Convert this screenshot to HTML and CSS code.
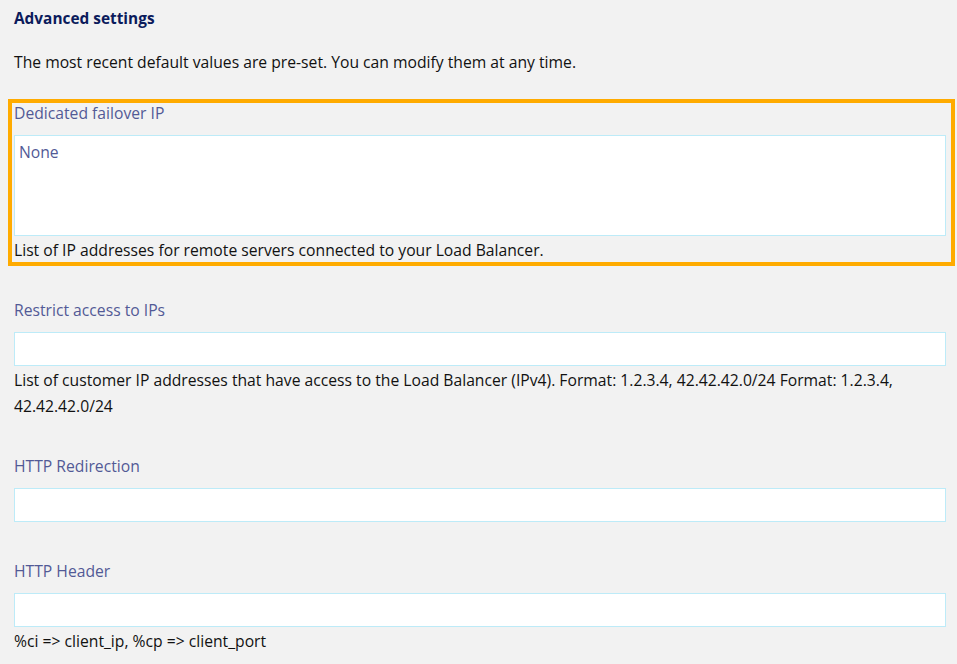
FILE: index.html
```html
<!DOCTYPE html>
<html lang="en">
<head>
    <meta charset="UTF-8">
    <meta name="viewport" content="width=device-width, initial-scale=1.0">
    <title>Advanced settings</title>
    <link rel="stylesheet" href="styles.css">
</head>
<body>

    <div class="container">
        <h4 class="title">Advanced settings</h4>
        <p class="intro">The most recent default values are pre-set. You can modify them at any time.</p>

        <!-- Failover IP (highlighted) -->
        <div class="field highlight">
            <label for="failover">Dedicated failover IP</label>
            <textarea id="failover" placeholder="None"></textarea>
            <div class="help">List of IP addresses for remote servers connected to your Load Balancer.</div>
        </div>

        <div class="field">
            <label for="restrict">Restrict access to IPs</label>
            <input type="text" id="restrict">
            <div class="help">List of customer IP addresses that have access to the Load Balancer (IPv4). Format: 1.2.3.4, 42.42.42.0/24 Format: 1.2.3.4, 42.42.42.0/24</div>
        </div>

        <div class="field">
            <label for="redirect">HTTP Redirection</label>
            <input type="text" id="redirect">
        </div>

        <div class="field header-field">
            <label for="header">HTTP Header</label>
            <input type="text" id="header">
            <div class="help">%ci =&gt; client_ip, %cp =&gt; client_port</div>
        </div>
    </div>

</body>
</html>
```

FILE: styles.css
```css
body {
    font-family: 'Open Sans', Lato, sans-serif;
    font-size: 15.7px;
    background-color: #f2f2f2;
    color: #111;
    margin: 0;
    padding: 0;
}
.container {
    padding: 9px 11px 0 14px;
}
.title {
    margin: 0;
    font-size: 15.4px;
    line-height: 20px;
    font-weight: bold;
    color: #0b1b5c;
}
.intro {
    margin: 23px 0 0;
    line-height: 20px;
}
.field {
    margin-top: 37px;
}
.field label {
    display: block;
    line-height: 20px;
    color: #525a96;
    margin-bottom: 12px;
}
.field input, .field textarea {
    display: block;
    box-sizing: border-box;
    width: 100%;
    height: 34px;
    margin: 0;
    padding: 6px 4px;
    border: 1px solid #bdebf8;
    background-color: #fff;
    font-family: inherit;
    font-size: 15.7px;
    line-height: 20px;
    color: #525a96;
    outline: none;
}
.field textarea {
    height: 101px;
    resize: none;
}
.field textarea::placeholder {
    color: #525a96;
    opacity: 1;
}
.help {
    padding-top: 1px;
    line-height: 26px;
}
.field.highlight {
    margin: 27px -9px 0 -6px;
    padding: 0 5px 0 2px;
    border: 4px solid #ffab00;
}
.field.highlight .help {
    margin-bottom: -1px;
}
.field.highlight + .field {
    margin-top: 34px;
}
.field.header-field {
    margin-top: 39px;
}
```
